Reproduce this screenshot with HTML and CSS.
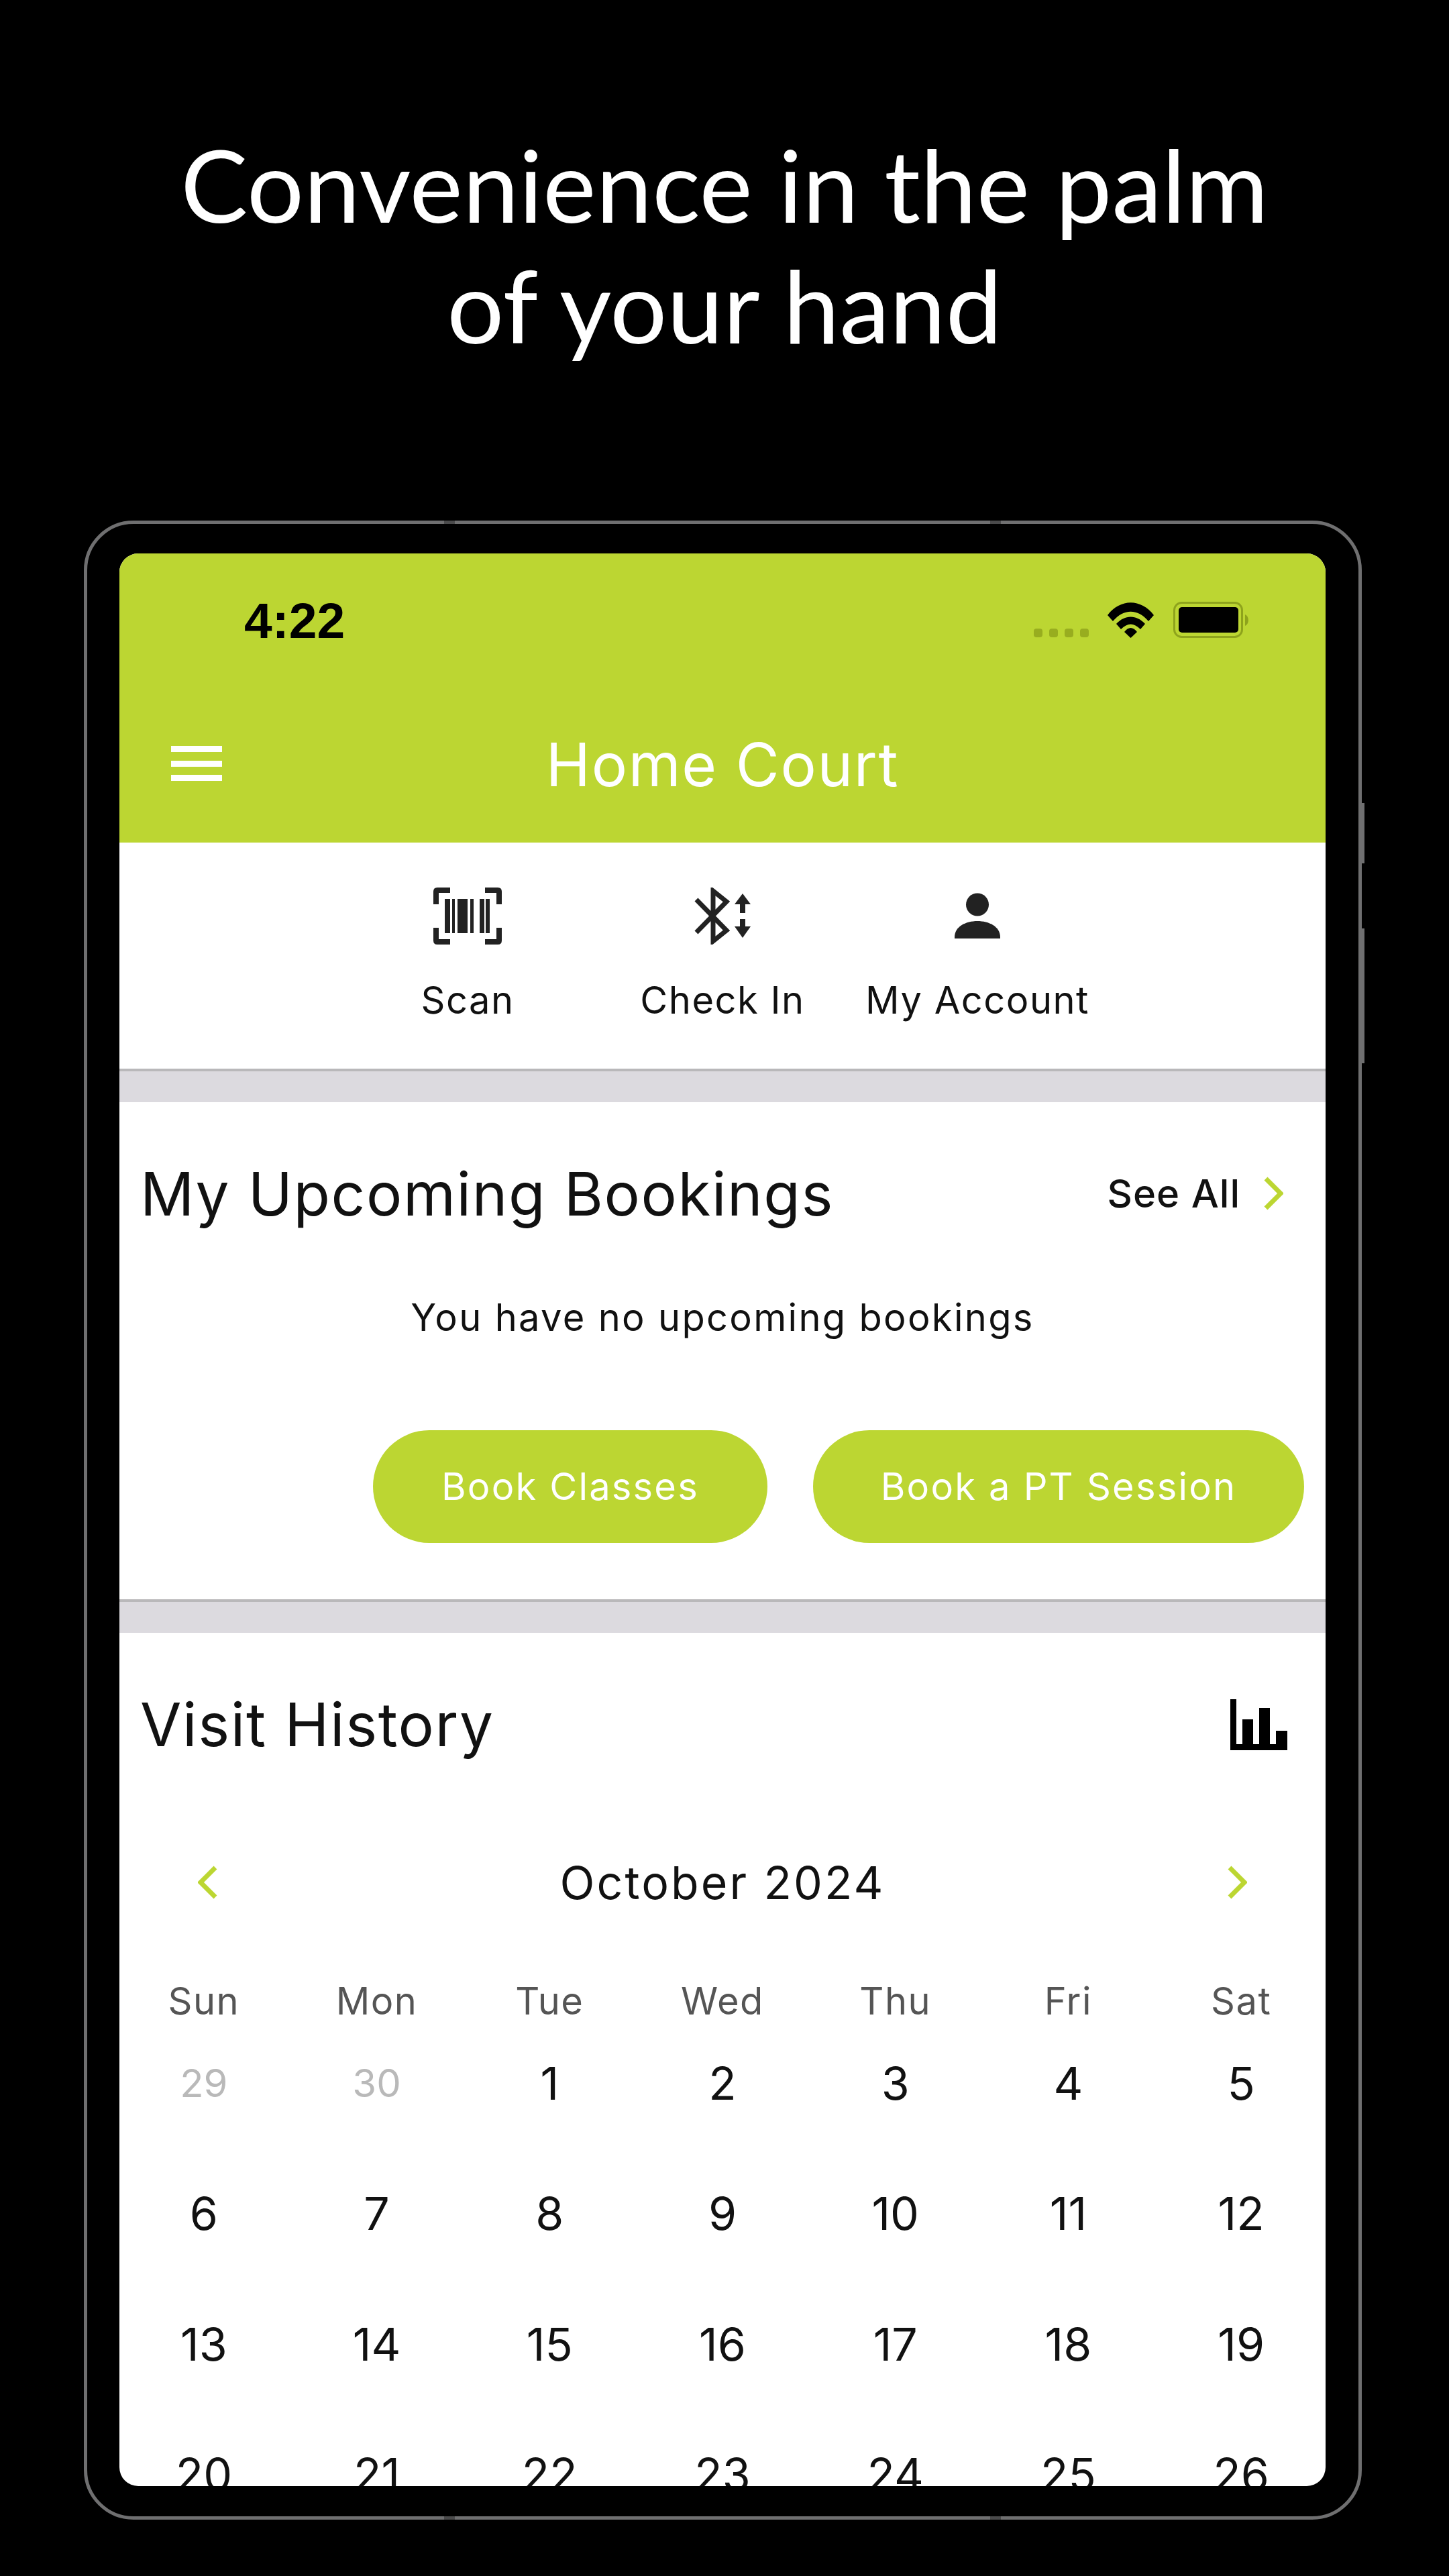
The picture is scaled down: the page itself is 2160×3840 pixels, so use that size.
FILE: index.html
```html
<!DOCTYPE html>
<html lang="en">
<head>
  <meta charset="UTF-8">
  <meta name="viewport" content="width=device-width, initial-scale=1.0">
  <title>Home Court</title>
  <link rel="stylesheet" href="styles.css">
</head>
<body>
  <h1 class="headline">Convenience in the palm<br>of your hand</h1>

  <div class="device">
    <span class="side-btn side-btn-top"></span>
    <span class="side-btn side-btn-low"></span>
    <span class="notch notch-tl"></span>
    <span class="notch notch-tr"></span>
    <span class="notch notch-bl"></span>
    <span class="notch notch-br"></span>
    <div class="screen">
      <header class="appbar">
        <div class="statusbar">
          <span class="clock">4:22</span>
          <div class="status-icons">
            <span class="signal"><i></i><i></i><i></i><i></i></span>
            <svg class="wifi" viewBox="0 0 69 53">
              <path d="M0 19 C19 -6 50 -6 69 19 L61 28 C45 9 24 9 8 28 Z"/>
              <path d="M13 32 C26 18 43 18 56 32 L49 40 C39 30 30 30 20 40 Z"/>
              <path d="M25 44 C31 36 38 36 44 44 L34.500 53 Z"/>
            </svg>
            <svg class="battery" viewBox="0 0 115 54">
              <rect x="1.500" y="1.500" width="101" height="51" rx="11" fill="none" stroke="#8ea31c" stroke-width="3"/>
              <rect x="8" y="8" width="89" height="38" rx="5"/>
              <path d="M107 19 C113 21 114 33 107 36 Z" fill="#8ea31c"/>
            </svg>
          </div>
        </div>
        <div class="titlebar">
          <span class="menu-icon"><i></i><i></i><i></i></span>
          <span class="app-title">Home Court</span>
        </div>
      </header>

      <nav class="actions">
        <div class="action">
          <svg class="action-icon" width="102" height="85" viewBox="0 0 102 85" fill="#222">
            <path d="M0 25 V6 Q0 0 6 0 H25 V8 H8 V25 Z"/>
            <path d="M102 25 V6 Q102 0 96 0 H77 V8 H94 V25 Z"/>
            <path d="M0 60 V79 Q0 85 6 85 H25 V77 H8 V60 Z"/>
            <path d="M102 60 V79 Q102 85 96 85 H77 V77 H94 V60 Z"/>
            <path d="M17 17 H25 V68 H17 Z M28 17 H32 V68 H28 Z M36 17 H51 V68 H36 Z M55 17 H60 V68 H55 Z M69 17 H76 V68 H69 Z M78 17 H84 V68 H78 Z"/>
          </svg>
          <span class="action-label">Scan</span>
        </div>
        <div class="action">
          <svg class="action-icon" width="84" height="85" viewBox="0 0 84 85" fill="none" stroke="#222">
            <path d="M3 18 L48 64 L28 80 V5 L48 21 L3 67" stroke-width="7"/>
            <path d="M72 9 L84 25 H60 Z M72 75 L84 58 H60 Z" fill="#222" stroke="none"/>
            <path d="M72 25 V38 M72 47 V58" stroke-width="8"/>
          </svg>
          <span class="action-label">Check In</span>
        </div>
        <div class="action">
          <svg class="action-icon" width="102" height="85" viewBox="0 0 102 85" fill="#222">
            <ellipse cx="51" cy="25.500" rx="17" ry="17"/>
            <path d="M17 76 V74 C17 42 85 42 85 74 V76 Z"/>
          </svg>
          <span class="action-label">My Account</span>
        </div>
      </nav>

      <div class="band"></div>

      <section class="bookings">
        <div class="section-head">
          <h2 class="section-title">My Upcoming Bookings</h2>
          <div class="see-all">
            <span>See All</span>
            <svg class="chevron" width="30" height="50" viewBox="0 0 30 50"><path d="M4 3 L26 25 L4 47"/></svg>
          </div>
        </div>
        <p class="empty-note">You have no upcoming bookings</p>
        <div class="book-buttons">
          <span class="pill pill-classes">Book Classes</span>
          <span class="pill pill-pt">Book a PT Session</span>
        </div>
      </section>

      <div class="band"></div>

      <section class="history">
        <div class="section-head">
          <h2 class="section-title">Visit History</h2>
          <svg class="chart-icon" width="85" height="76" viewBox="0 0 85 76">
            <path d="M0 0 H9 V67 H18 V30 H34 V67 H43 V13 H59 V67 H68 V47 H85 V76 H0 Z"/>
          </svg>
        </div>
        <div class="month-row">
          <svg class="chevron" width="30" height="50" viewBox="0 0 30 50"><path d="M26 3 L4 25 L26 47"/></svg>
          <span class="month-name">October 2024</span>
          <svg class="chevron" width="30" height="50" viewBox="0 0 30 50"><path d="M4 3 L26 25 L4 47"/></svg>
        </div>
        <div class="weekdays">
          <span>Sun</span><span>Mon</span><span>Tue</span><span>Wed</span><span>Thu</span><span>Fri</span><span>Sat</span>
        </div>
        <div class="days">
          <span class="muted">29</span><span class="muted">30</span><span>1</span><span>2</span><span>3</span><span>4</span><span>5</span>
          <span>6</span><span>7</span><span>8</span><span>9</span><span>10</span><span>11</span><span>12</span>
          <span>13</span><span>14</span><span>15</span><span>16</span><span>17</span><span>18</span><span>19</span>
          <span>20</span><span>21</span><span>22</span><span>23</span><span>24</span><span>25</span><span>26</span>
        </div>
      </section>
    </div>
  </div>
</body>
</html>
```

FILE: styles.css
```css
* {
  box-sizing: border-box;
}

body {
  margin: 0;
  height: 3840px;
  overflow: hidden;
  background: #000;
  font-family: Inter, "Liberation Sans", sans-serif;
  color: #111;
}

.headline {
  margin: 0;
  padding-top: 184px;
  height: 776px;
  text-align: center;
  font-family: Lato, "Noto Sans", sans-serif;
  font-weight: 400;
  font-size: 150px;
  line-height: 180px;
  color: #fff;
}

/* device frame */
.device {
  position: relative;
  margin-left: 125px;
  width: 1905px;
  height: 2980px;
  padding: 44px 49px 45px 48px;
  border: 5px solid #6f6f70;
  border-radius: 74px;
}

.side-btn {
  position: absolute;
  right: -9px;
  width: 5px;
  background: #6f6f70;
}

.side-btn-top {
  top: 416px;
  height: 90px;
}

.side-btn-low {
  top: 603px;
  height: 201px;
}

.notch {
  position: absolute;
  width: 16px;
  height: 5px;
  background: #4a4a4b;
}

.notch-tl,
.notch-tr {
  top: -5px;
}

.notch-bl,
.notch-br {
  bottom: -5px;
}

.notch-tl,
.notch-bl {
  left: 532px;
}

.notch-tr,
.notch-br {
  left: 1346px;
}

.screen {
  height: 2881px;
  background: #fff;
  border-radius: 28px;
  overflow: hidden;
}

/* green header */
.appbar {
  height: 431px;
  background: #bcd632;
}

.statusbar {
  display: flex;
  justify-content: space-between;
  align-items: flex-start;
  height: 230px;
  padding: 57px 112px 0 186px;
}

.clock {
  font-family: "Liberation Sans", sans-serif;
  font-size: 75px;
  line-height: 86px;
  font-weight: 700;
  color: #000;
}

.status-icons {
  display: flex;
  align-items: flex-end;
  padding-top: 15px;
}

.signal {
  display: flex;
  gap: 10px;
  margin-right: 28px;
  margin-bottom: 1px;
}

.signal i {
  width: 13px;
  height: 13px;
  border-radius: 4px;
  background: #98ad1f;
}

.wifi {
  width: 69px;
  height: 53px;
  margin-right: 29px;
}

.battery {
  width: 115px;
  height: 54px;
}

.titlebar {
  position: relative;
  display: flex;
  justify-content: center;
  align-items: center;
  height: 168px;
}

.menu-icon {
  position: absolute;
  left: 77px;
  top: 57px;
  display: flex;
  flex-direction: column;
  gap: 12.500px;
}

.menu-icon i {
  width: 76px;
  height: 9px;
  background: #fff;
}

.app-title {
  font-size: 89px;
  letter-spacing: 1.700px;
  color: #fff;
}

/* quick actions */
.actions {
  display: flex;
  justify-content: center;
  height: 337px;
  padding-top: 67px;
}

.action {
  display: flex;
  flex-direction: column;
  align-items: center;
  width: 380px;
}

.action-icon {
  display: block;
}

.action-label {
  margin-top: 51px;
  font-size: 56px;
  line-height: 64px;
  letter-spacing: 1.500px;
  white-space: nowrap;
}

.band {
  height: 50px;
  background: #dcdadf;
  border-top: 4px solid #b9b8ba;
}

/* shared section bits */
.section-head {
  display: flex;
  justify-content: space-between;
  align-items: center;
  padding-left: 31px;
}

.section-title {
  margin: 0;
  font-weight: 400;
  font-size: 89px;
  line-height: 104px;
  letter-spacing: 1.600px;
}

.chevron {
  display: block;
  fill: none;
  stroke: #bcd632;
  stroke-width: 7;
}

/* bookings */
.bookings {
  height: 741px;
  padding-top: 85px;
}

.bookings .section-head {
  padding-right: 63px;
}

.see-all {
  display: flex;
  align-items: center;
  gap: 34px;
  font-size: 58px;
  font-weight: 500;
  letter-spacing: 1px;
  margin-top: -3px;
}

.empty-note {
  margin: 100px 0 0;
  text-align: center;
  font-size: 56px;
  line-height: 64px;
  letter-spacing: 2.300px;
}

.book-buttons {
  display: flex;
  justify-content: flex-end;
  gap: 68px;
  margin-top: 136px;
  padding-right: 32px;
}

.pill {
  display: flex;
  justify-content: center;
  align-items: center;
  height: 168px;
  border-radius: 84px;
  background: #bcd632;
  color: #fff;
  font-size: 56px;
  letter-spacing: 2.200px;
}

.pill-classes {
  width: 588px;
}

.pill-pt {
  width: 732px;
}

/* visit history */
.history {
  padding-top: 85px;
}

.history .section-head {
  padding-right: 57px;
}

.chart-icon {
  display: block;
  fill: #000;
}

.month-row {
  display: flex;
  justify-content: space-between;
  align-items: center;
  margin-top: 143px;
  padding: 0 117px;
}

.month-name {
  font-size: 68px;
  line-height: 80px;
  letter-spacing: 3.100px;
}

.weekdays,
.days {
  display: grid;
  grid-template-columns: repeat(7, 1fr);
  margin: 0 -3px;
  text-align: center;
}

.weekdays {
  margin-top: 105px;
  font-size: 56px;
  line-height: 64px;
  letter-spacing: 1.500px;
  color: #555;
}

.days {
  margin-top: 50px;
  grid-auto-rows: 194.300px;
  font-size: 68px;
  line-height: 80px;
}

.days .muted {
  font-size: 58px;
  color: #b9b9b9;
}
```
